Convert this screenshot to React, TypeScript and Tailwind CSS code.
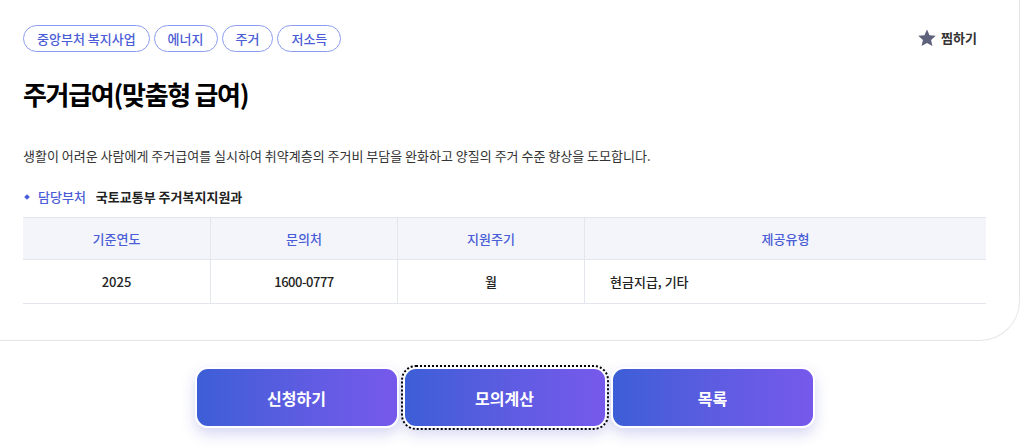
import React from 'react';

const tags = ['중앙부처 복지사업', '에너지', '주거', '저소득'];

const buttons = ['신청하기', '모의계산', '목록'];

function StarIcon() {
    return (
        <svg width="20" height="20" viewBox="0 0 24 24" className="text-[#5d617c]">
            <path
                fill="currentColor"
                d="M12 1.8l3.05 6.9 7.45.7-5.65 4.95 1.7 7.35L12 17.85 5.45 21.7l1.7-7.35L1.5 9.4l7.45-.7z"
            />
        </svg>
    );
}

export default function App() {
    return (
        <div className="w-[1024px] h-[447px] bg-white overflow-hidden font-['Noto_Sans_CJK_KR','Noto_Sans',sans-serif] text-[#222]">
            {/* Detail card */}
            <div className="w-[1020px] h-[341px] border-r border-b border-[#e6e6ea] rounded-br-[40px] pl-[23px] pr-[34px] pt-[25px]">
                <div className="flex items-start justify-between">
                    <div className="flex gap-[4px]">
                        {tags.map(t => (
                            <span
                                key={t}
                                className="h-[27px] px-[13px] flex items-center rounded-full border border-[#8b9cf0] text-[13px] font-medium text-[#4a5dd6] leading-none"
                            >
                                {t}
                            </span>
                        ))}
                    </div>
                    <button className="flex items-center gap-[4px] mt-[3px] mr-[8px] text-[13px] font-bold text-[#333]">
                        <StarIcon />
                        <span>찜하기</span>
                    </button>
                </div>

                <h1 className="mt-[24px] text-[26px] font-bold text-black leading-[36px] tracking-[-1.3px]">
                    주거급여(맞춤형 급여)
                </h1>

                <p className="mt-[34px] text-[13px] text-[#333] leading-[20px]">
                    생활이 어려운 사람에게 주거급여를 실시하여 취약계층의 주거비 부담을 완화하고 양질의 주거 수준 향상을 도모합니다.
                </p>

                <div className="mt-[21px] flex items-center text-[13px] leading-[20px]">
                    <span className="w-[4px] h-[4px] rotate-45 bg-[#4a5dd6] ml-[2px] mr-[9px]" />
                    <span className="text-[#4a5dd6] font-medium">담당부처</span>
                    <span className="ml-[10px] font-bold text-[#222]">국토교통부 주거복지지원과</span>
                </div>

                {/* Info table */}
                <div className="mt-[10px] w-[963px] border-t border-[#e4e6ee] text-[13px]">
                    <div className="grid grid-cols-[187px_187px_187px_1fr] h-[42px] bg-[#f4f5fa] border-b border-[#e4e6ee] text-[#4a5dd6] font-medium">
                        <div className="flex items-center justify-center">기준연도</div>
                        <div className="flex items-center justify-center border-l border-[#e4e6ee]">문의처</div>
                        <div className="flex items-center justify-center border-l border-[#e4e6ee]">지원주기</div>
                        <div className="flex items-center justify-center border-l border-[#e4e6ee]">제공유형</div>
                    </div>
                    <div className="grid grid-cols-[187px_187px_187px_1fr] h-[44px] border-b border-[#e4e6ee] text-[#222] font-medium">
                        <div className="flex items-center justify-center">2025</div>
                        <div className="flex items-center justify-center border-l border-[#e4e6ee] tracking-[-0.5px]">1600-0777</div>
                        <div className="flex items-center justify-center border-l border-[#e4e6ee]">월</div>
                        <div className="flex items-center pl-[25px] border-l border-[#e4e6ee]">현금지급, 기타</div>
                    </div>
                </div>
            </div>

            {/* Actions */}
            <div className="flex justify-center gap-[4px] pr-[15px] mt-[26px]">
                {buttons.map((b, i) => (
                    <button
                        key={b}
                        className={
                            'w-[204px] h-[61px] rounded-[13px] border-2 border-white bg-gradient-to-r from-[#3c5ed6] to-[#7659ec] text-white text-[16px] font-bold shadow-[0_6px_14px_rgba(90,90,210,0.25)] ' +
                            (i === 1 ? 'outline-2 outline-dotted outline-black outline-offset-[0px]' : '')
                        }
                    >
                        {b}
                    </button>
                ))}
            </div>
        </div>
    );
}
